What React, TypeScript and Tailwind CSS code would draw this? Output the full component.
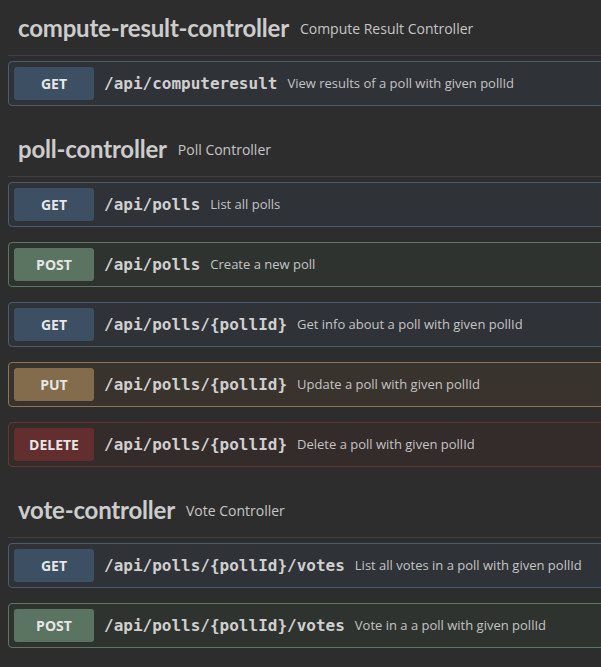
import React from "react";

type Method = "GET" | "POST" | "PUT" | "DELETE";

const methodStyles: Record<Method, { box: string; badge: string }> = {
  GET: { box: "border-[#4b5c70] bg-[#2f3236]", badge: "bg-[#3c4f63]" },
  POST: { box: "border-[#5f7665] bg-[#2f332f]", badge: "bg-[#5b7462]" },
  PUT: { box: "border-[#8c7656] bg-[#38332c]", badge: "bg-[#826c4c]" },
  DELETE: { box: "border-[#6a3434] bg-[#342b2b]", badge: "bg-[#632e2e]" },
};

const sections: {
  name: string;
  title: string;
  ops: { method: Method; path: string; desc: string }[];
}[] = [
  {
    name: "compute-result-controller",
    title: "Compute Result Controller",
    ops: [
      { method: "GET", path: "/api/computeresult", desc: "View results of a poll with given pollId" },
    ],
  },
  {
    name: "poll-controller",
    title: "Poll Controller",
    ops: [
      { method: "GET", path: "/api/polls", desc: "List all polls" },
      { method: "POST", path: "/api/polls", desc: "Create a new poll" },
      { method: "GET", path: "/api/polls/{pollId}", desc: "Get info about a poll with given pollId" },
      { method: "PUT", path: "/api/polls/{pollId}", desc: "Update a poll with given pollId" },
      { method: "DELETE", path: "/api/polls/{pollId}", desc: "Delete a poll with given pollId" },
    ],
  },
  {
    name: "vote-controller",
    title: "Vote Controller",
    ops: [
      { method: "GET", path: "/api/polls/{pollId}/votes", desc: "List all votes in a poll with given pollId" },
      { method: "POST", path: "/api/polls/{pollId}/votes", desc: "Vote in a a poll with given pollId" },
    ],
  },
];

function Operation({ method, path, desc }: { method: Method; path: string; desc: string }) {
  const s = methodStyles[method];
  return (
    <div className={`mb-[15px] flex h-[45px] items-center rounded-[4px] border p-[5px] ${s.box}`}>
      <span
        className={`w-[80px] shrink-0 rounded-[3px] py-[6px] text-center font-['Open_Sans',sans-serif] text-[14px] leading-[21px] font-bold text-[#e6e6e6] ${s.badge}`}
      >
        {method}
      </span>
      <span className="px-[10px] font-['DejaVu_Sans_Mono',monospace] text-[16px] font-bold text-[#cfcfcf]">
        {path}
      </span>
      <span className="font-['Open_Sans',sans-serif] text-[13px] text-[#c4c4c4]">{desc}</span>
    </div>
  );
}

export default function App() {
  return (
    <div className="min-h-screen w-full overflow-hidden bg-[#2d2d2d]">
      <div className="w-[640px] pl-2">
        {sections.map((sec) => (
          <section key={sec.name} className="mb-px">
            <h4 className="mb-[5px] flex items-center border-b border-[#3e4044] pt-[10px] pb-[9px] pl-[10px]">
              <span className="font-['Lato',sans-serif] text-[24px] leading-[36px] font-bold tracking-[-0.2px] text-[#cccccc]">
                {sec.name}
              </span>
              <span className="pl-[11px] font-['Open_Sans',sans-serif] text-[14px] text-[#c6c6c6]">
                {sec.title}
              </span>
            </h4>
            {sec.ops.map((op, i) => (
              <Operation key={i} {...op} />
            ))}
          </section>
        ))}
      </div>
    </div>
  );
}
